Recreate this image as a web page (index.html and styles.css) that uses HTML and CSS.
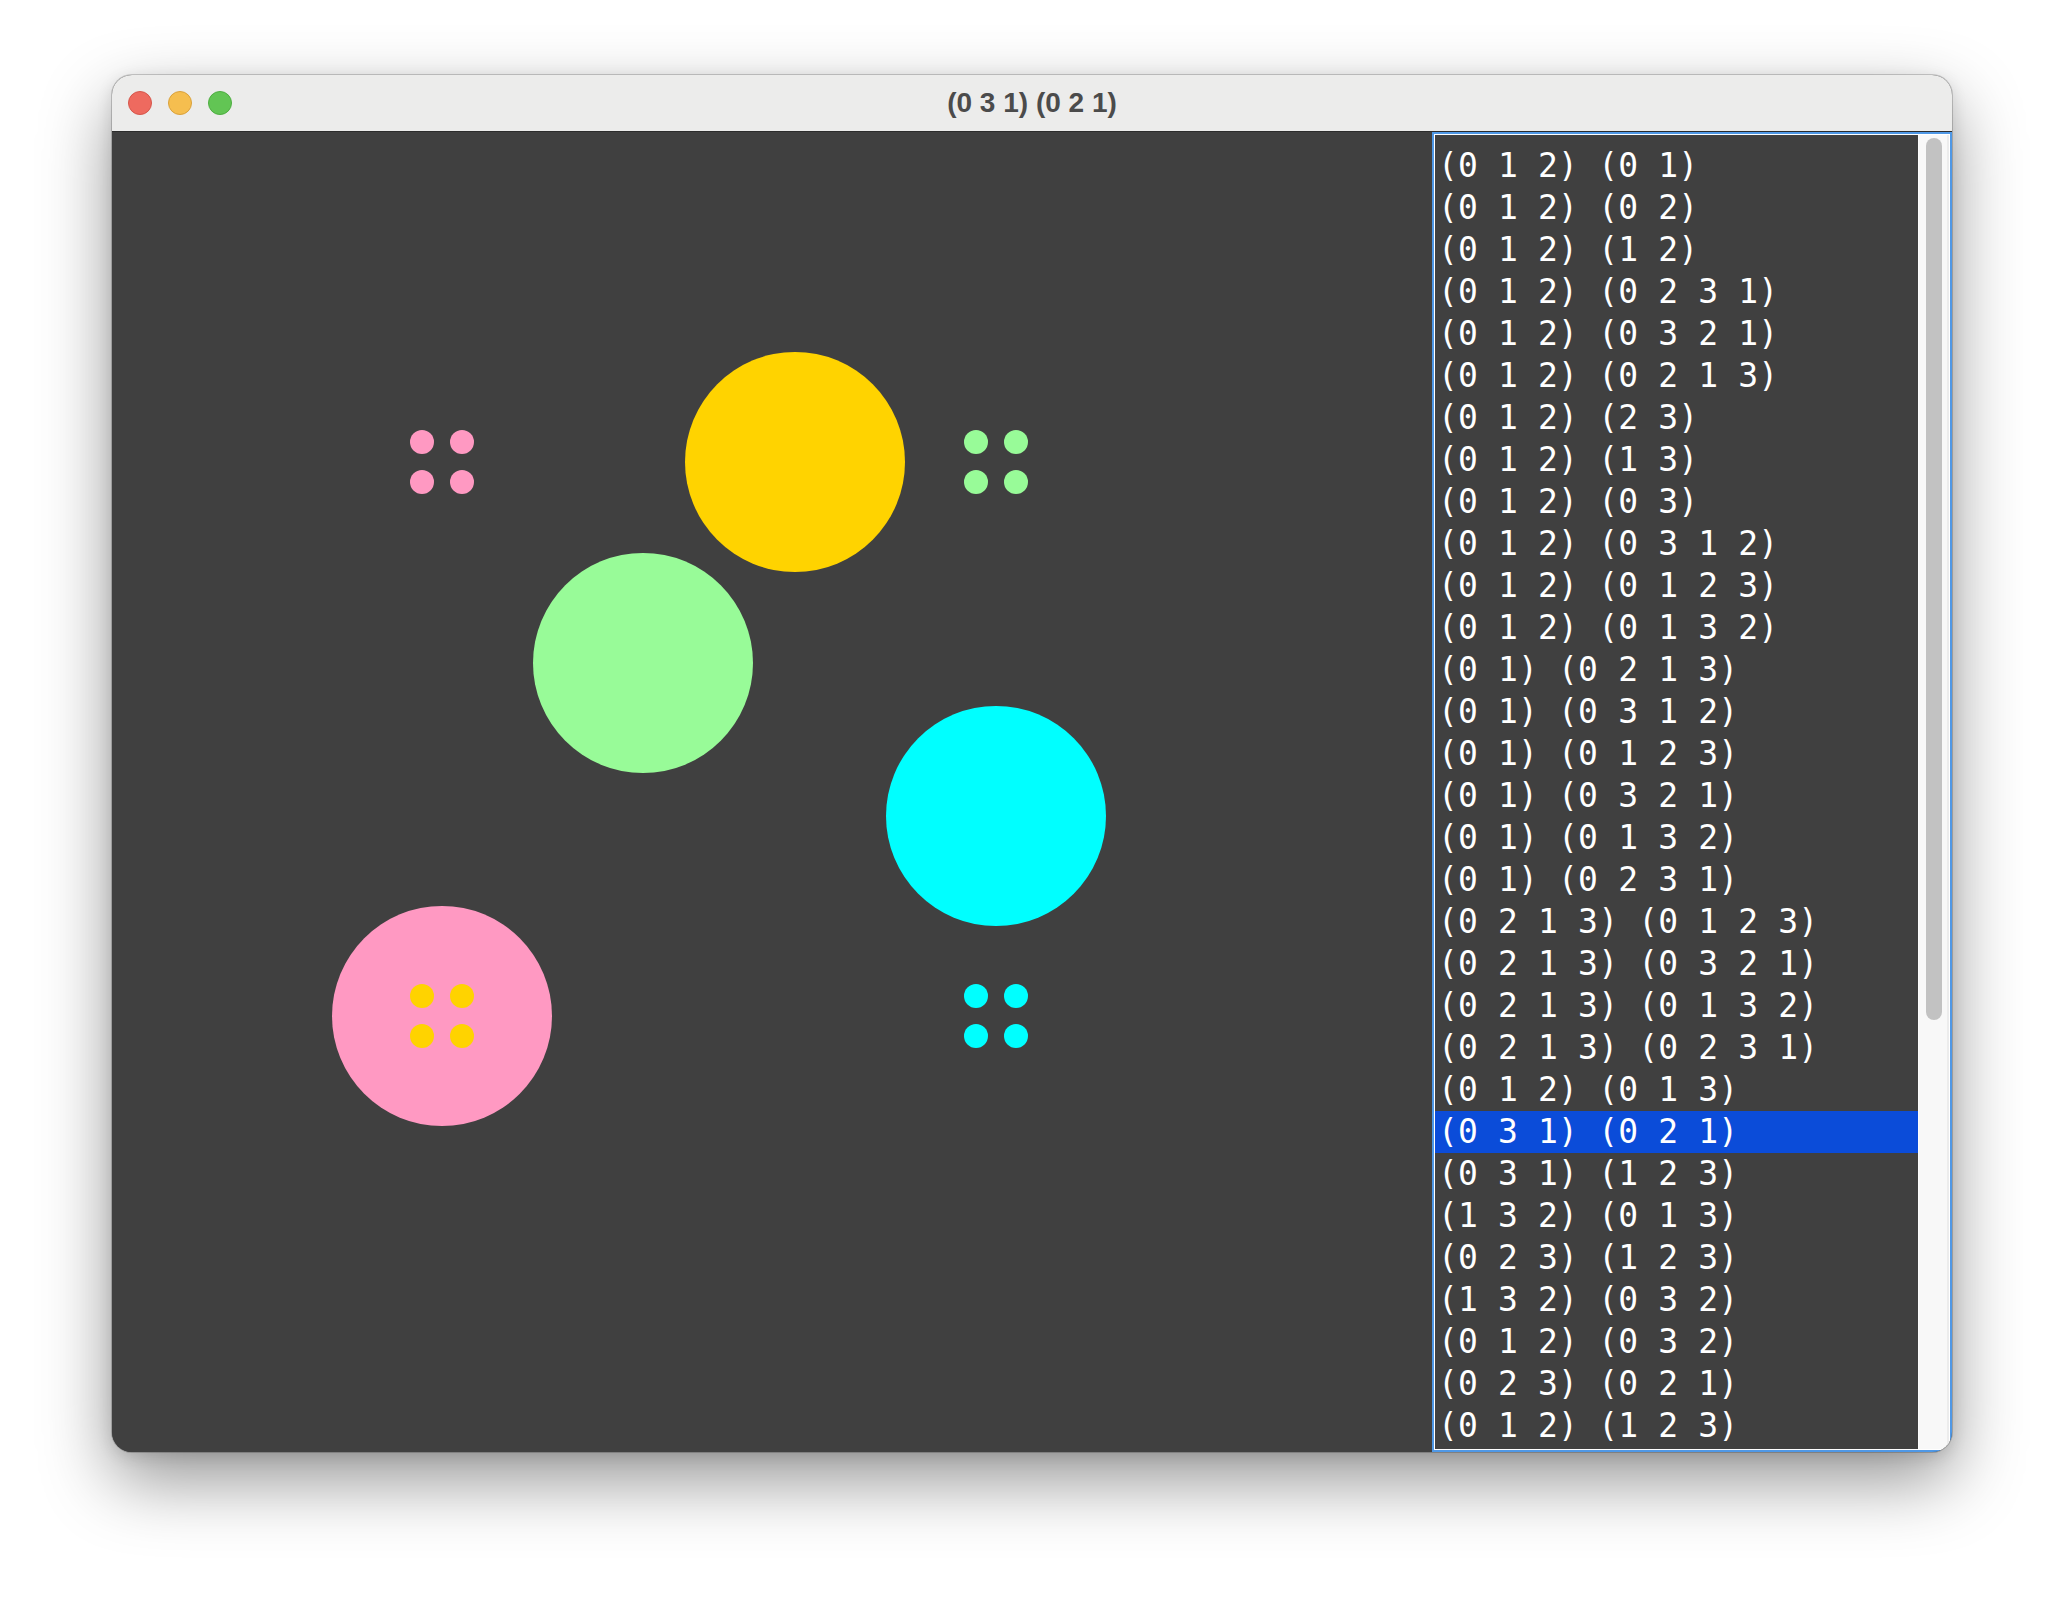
FILE: index.html
```html
<!DOCTYPE html>
<html>
<head>
<meta charset="utf-8">
<title>(0 3 1) (0 2 1)</title>
<link rel="stylesheet" href="styles.css">
</head>
<body>
<div class="stage">
  <div class="window">
    <div class="titlebar">
      <div class="lights">
        <span class="light red"></span>
        <span class="light yellow"></span>
        <span class="light green"></span>
      </div>
      <div class="title">(0 3 1) (0 2 1)</div>
      <div class="spacer"></div>
    </div>
    <div class="main">
      <div class="canvas">
        <svg class="board" width="1320" height="1320" viewBox="0 0 1320 1320">
          <circle cx="683" cy="330" r="110" fill="#ffd300"/>
          <circle cx="531" cy="531" r="110" fill="#98fb98"/>
          <circle cx="884" cy="684" r="110" fill="#00ffff"/>
          <circle cx="330" cy="884" r="110" fill="#ff99c2"/>

          <circle cx="310" cy="310" r="12" fill="#ff99c2"/>
          <circle cx="350" cy="310" r="12" fill="#ff99c2"/>
          <circle cx="310" cy="350" r="12" fill="#ff99c2"/>
          <circle cx="350" cy="350" r="12" fill="#ff99c2"/>

          <circle cx="864" cy="310" r="12" fill="#98fb98"/>
          <circle cx="904" cy="310" r="12" fill="#98fb98"/>
          <circle cx="864" cy="350" r="12" fill="#98fb98"/>
          <circle cx="904" cy="350" r="12" fill="#98fb98"/>

          <circle cx="864" cy="864" r="12" fill="#00ffff"/>
          <circle cx="904" cy="864" r="12" fill="#00ffff"/>
          <circle cx="864" cy="904" r="12" fill="#00ffff"/>
          <circle cx="904" cy="904" r="12" fill="#00ffff"/>

          <circle cx="310" cy="864" r="12" fill="#ffd300"/>
          <circle cx="350" cy="864" r="12" fill="#ffd300"/>
          <circle cx="310" cy="904" r="12" fill="#ffd300"/>
          <circle cx="350" cy="904" r="12" fill="#ffd300"/>
        </svg>
      </div>
      <div class="list">
        <div class="list-inner">
          <div class="rows">
            <div class="row">(0 1 2) (0 1)</div>
            <div class="row">(0 1 2) (0 2)</div>
            <div class="row">(0 1 2) (1 2)</div>
            <div class="row">(0 1 2) (0 2 3 1)</div>
            <div class="row">(0 1 2) (0 3 2 1)</div>
            <div class="row">(0 1 2) (0 2 1 3)</div>
            <div class="row">(0 1 2) (2 3)</div>
            <div class="row">(0 1 2) (1 3)</div>
            <div class="row">(0 1 2) (0 3)</div>
            <div class="row">(0 1 2) (0 3 1 2)</div>
            <div class="row">(0 1 2) (0 1 2 3)</div>
            <div class="row">(0 1 2) (0 1 3 2)</div>
            <div class="row">(0 1) (0 2 1 3)</div>
            <div class="row">(0 1) (0 3 1 2)</div>
            <div class="row">(0 1) (0 1 2 3)</div>
            <div class="row">(0 1) (0 3 2 1)</div>
            <div class="row">(0 1) (0 1 3 2)</div>
            <div class="row">(0 1) (0 2 3 1)</div>
            <div class="row">(0 2 1 3) (0 1 2 3)</div>
            <div class="row">(0 2 1 3) (0 3 2 1)</div>
            <div class="row">(0 2 1 3) (0 1 3 2)</div>
            <div class="row">(0 2 1 3) (0 2 3 1)</div>
            <div class="row">(0 1 2) (0 1 3)</div>
            <div class="row selected">(0 3 1) (0 2 1)</div>
            <div class="row">(0 3 1) (1 2 3)</div>
            <div class="row">(1 3 2) (0 1 3)</div>
            <div class="row">(0 2 3) (1 2 3)</div>
            <div class="row">(1 3 2) (0 3 2)</div>
            <div class="row">(0 1 2) (0 3 2)</div>
            <div class="row">(0 2 3) (0 2 1)</div>
            <div class="row">(0 1 2) (1 2 3)</div>
          </div>
          <div class="scrollbar"><div class="thumb"></div></div>
        </div>
      </div>
    </div>
  </div>
</div>
</body>
</html>
```

FILE: styles.css
```css
html, body {
  margin: 0;
  padding: 0;
  background: #ffffff;
}

.stage {
  padding: 75px 0 0 112px;
  height: 1600px;
  box-sizing: border-box;
}

.window {
  width: 1840px;
  height: 1377px;
  border-radius: 20px;
  overflow: hidden;
  background: #404040;
  box-shadow: 0 0 0 1px rgba(0, 0, 0, 0.18), 0 28px 70px rgba(0, 0, 0, 0.42), 0 4px 16px rgba(0, 0, 0, 0.12);
  display: flex;
  flex-direction: column;
}

.titlebar {
  height: 57px;
  box-sizing: border-box;
  background: #ececeb;
  border-bottom: 1px solid #2c2c2c;
  display: grid;
  grid-template-columns: 1fr auto 1fr;
  align-items: center;
  flex: none;
}

.lights {
  display: flex;
  gap: 16px;
  padding-left: 16px;
}

.light {
  width: 24px;
  height: 24px;
  border-radius: 50%;
  box-sizing: border-box;
  display: block;
}

.light.red {
  background: #ee6a5f;
  border: 1px solid #d5564b;
}

.light.yellow {
  background: #f5be4f;
  border: 1px solid #d9a13c;
}

.light.green {
  background: #62c554;
  border: 1px solid #4ead41;
}

.title {
  font-family: "Liberation Sans", Arial, sans-serif;
  font-weight: bold;
  font-size: 28px;
  color: #4b4b4b;
  line-height: 1;
  white-space: pre;
}

.main {
  display: flex;
  height: 1320px;
  flex: none;
}

.canvas {
  width: 1320px;
  height: 1320px;
  flex: none;
  background: #404040;
}

.board {
  display: block;
}

.list {
  width: 520px;
  height: 1320px;
  flex: none;
  box-sizing: border-box;
  border: 2px solid #4f98e6;
}

.list-inner {
  height: 100%;
  box-sizing: border-box;
  border: 1px solid #ffffff;
  display: flex;
}

.rows {
  flex: 1;
  background: #404040;
  padding-top: 10px;
  overflow: hidden;
}

.row {
  height: 42px;
  line-height: 42px;
  padding-left: 3px;
  font-family: "DejaVu Sans Mono", "Liberation Mono", monospace;
  font-size: 33px;
  letter-spacing: 0.15px;
  color: #ffffff;
  white-space: pre;
}

.row.selected {
  background: #0b4cd9;
}

.scrollbar {
  width: 31px;
  flex: none;
  box-sizing: border-box;
  background: #f8f8f8;
  border-left: 1px solid #fdfdfd;
  border-right: 2px solid #ececec;
  padding: 3px 5px 0 7px;
}

.thumb {
  width: 16px;
  height: 882px;
  border-radius: 8px;
  background: #c2c2c2;
}
```
